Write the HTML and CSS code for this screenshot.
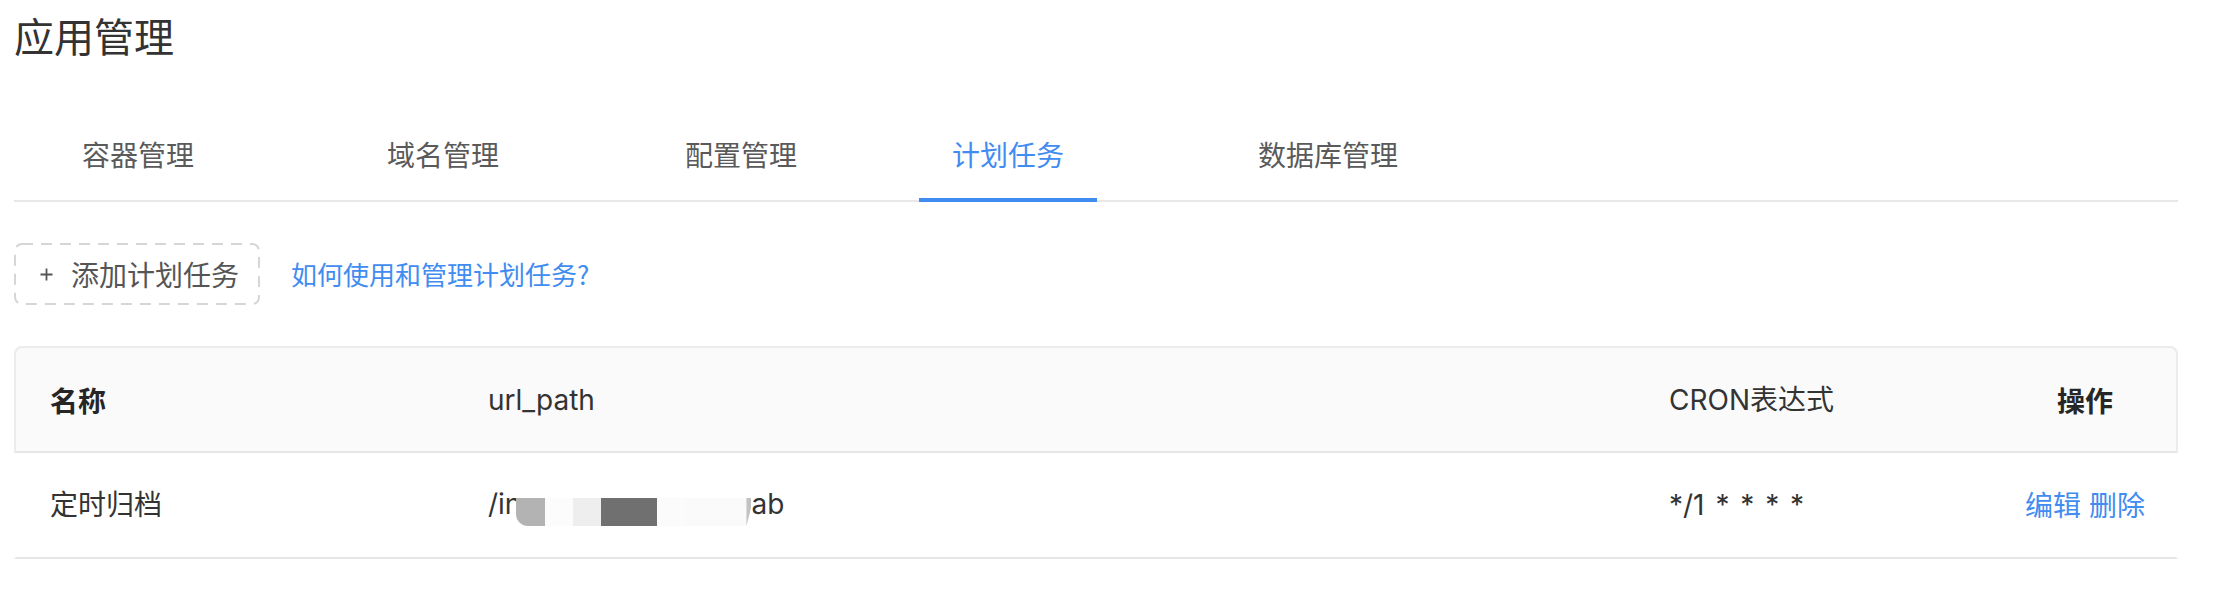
FILE: index.html
```html
<!DOCTYPE html>
<html lang="zh-CN">
<head>
<meta charset="utf-8">
<title>应用管理</title>
<link rel="stylesheet" href="styles.css">
</head>
<body>
<div class="page">
  <h1 class="title">应用管理</h1>

  <nav class="tabs">
    <a class="tab">容器管理</a>
    <a class="tab">域名管理</a>
    <a class="tab">配置管理</a>
    <a class="tab tab-active">计划任务</a>
    <a class="tab">数据库管理</a>
  </nav>

  <div class="toolbar">
    <button class="add-btn" type="button">
      <svg class="dash-border" width="246" height="62" viewBox="0 0 246 62"><rect x="1" y="1" width="244" height="60" rx="7" ry="7"/></svg>
      <svg class="plus-icon" width="13" height="13" viewBox="0 0 13 13"><path d="M6.5 0.5v12M0.5 6.5h12"/></svg>
      <span class="add-label">添加计划任务</span>
    </button>
    <a class="help-link">如何使用和管理计划任务?</a>
  </div>

  <div class="table">
    <div class="row head">
      <div class="cell strong">名称</div>
      <div class="cell">url_path</div>
      <div class="cell">CRON表达式</div>
      <div class="cell center strong">操作</div>
    </div>
    <div class="row body">
      <div class="cell">定时归档</div>
      <div class="cell">/in<span class="redact"><i class="seg s1"></i><i class="seg s2"></i><i class="seg s3"></i><i class="seg s4"></i><i class="seg s5"></i><i class="seg s6"></i><i class="seg s7"></i></span>ab</div>
      <div class="cell cron">*/1 * * * *</div>
      <div class="cell center"><a class="op">编辑</a> <a class="op">删除</a></div>
    </div>
  </div>
</div>
</body>
</html>
```

FILE: styles.css
```css
* { box-sizing: border-box; }

html, body {
  margin: 0;
  padding: 0;
  background: #ffffff;
}

body {
  font-family: Inter, "Noto Sans CJK SC", sans-serif;
  color: #333333;
}

.page {
  padding: 0 50px 0 14px;
}

.title {
  margin: 7px 0 0;
  font-size: 40px;
  line-height: 56px;
  font-weight: 400;
  color: #333333;
  font-family: "Noto Sans CJK SC", sans-serif;
}

/* Tabs */
.tabs {
  display: grid;
  grid-template-columns: 305px 298px 267px 306px auto;
  padding: 71px 0 0 35px;
  border-bottom: 2px solid #e8e8e8;
}

.tab {
  position: relative;
  justify-self: start;
  padding: 0 33px 26px;
  font-size: 28px;
  line-height: 40px;
  color: #5a5a5a;
  font-family: "Noto Sans CJK SC", sans-serif;
  cursor: pointer;
}

.tab-active {
  color: #418cf0;
}

.tab-active::after {
  content: "";
  position: absolute;
  left: 0;
  right: 0;
  bottom: -2px;
  height: 4px;
  background: #418cf0;
}

/* Toolbar */
.toolbar {
  display: flex;
  align-items: center;
  gap: 31px;
  margin-top: 41px;
}

.add-btn {
  position: relative;
  display: inline-flex;
  align-items: center;
  width: 246px;
  height: 62px;
  padding: 0 0 0 26px;
  border: none;
  background: #ffffff;
  border-radius: 8px;
  font: inherit;
  cursor: pointer;
}

.dash-border {
  position: absolute;
  left: 0;
  top: 0;
  pointer-events: none;
}

.dash-border rect {
  fill: none;
  stroke: #d6d6d6;
  stroke-width: 2;
  stroke-dasharray: 11 8;
}

.plus-icon {
  display: block;
  margin-right: 18px;
}

.plus-icon path {
  stroke: #555555;
  stroke-width: 1.8;
  fill: none;
}

.add-label {
  font-family: "Noto Sans CJK SC", sans-serif;
  font-size: 28px;
  line-height: 40px;
  color: #555555;
}

.help-link {
  font-family: "Noto Sans CJK SC", sans-serif;
  font-size: 26px;
  line-height: 40px;
  color: #418cf0;
  cursor: pointer;
}

/* Table */
.table {
  margin-top: 41px;
}

.row {
  display: grid;
  grid-template-columns: 438px 1181px 359px 182px;
  align-items: center;
  font-size: 28px;
  line-height: 40px;
}

.head {
  height: 107px;
  background: #fafafa;
  border: 2px solid #ececec;
  border-bottom-color: #e6e6e6;
  border-radius: 8px 8px 0 0;
  color: #333333;
}

.body {
  height: 106px;
  border: 2px solid transparent;
  border-top: none;
  border-bottom-color: #e6e6e6;
  color: #333333;
}

.cell {
  padding-left: 34px;
  white-space: nowrap;
}

.cron {
  word-spacing: 3px;
}

.center {
  padding-left: 0;
  text-align: center;
}

.strong {
  font-weight: 700;
  font-family: "Noto Sans CJK SC", sans-serif;
  color: #262626;
}

.op {
  font-family: "Noto Sans CJK SC", sans-serif;
  color: #418cf0;
  cursor: pointer;
}

/* redaction mask over part of the path */
.redact {
  display: inline-block;
  overflow: hidden;
  height: 28px;
  margin-left: -5px;
  vertical-align: -12px;
}

.redact .seg {
  float: left;
  height: 28px;
}

.s1 { width: 29px; background: #b3b3b3; border-bottom-left-radius: 12px; }
.s2 { width: 28px; background: #fcfcfc; }
.s3 { width: 28px; background: #eeeeee; }
.s4 { width: 56px; background: #707070; }
.s5 { width: 28px; background: #fbfbfb; }
.s6 { width: 61px; background: #fafafa; }
.s7 { width: 5px; background: #c2c2c2; clip-path: polygon(0 0, 100% 0, 100% 30%, 0 100%); }
```
